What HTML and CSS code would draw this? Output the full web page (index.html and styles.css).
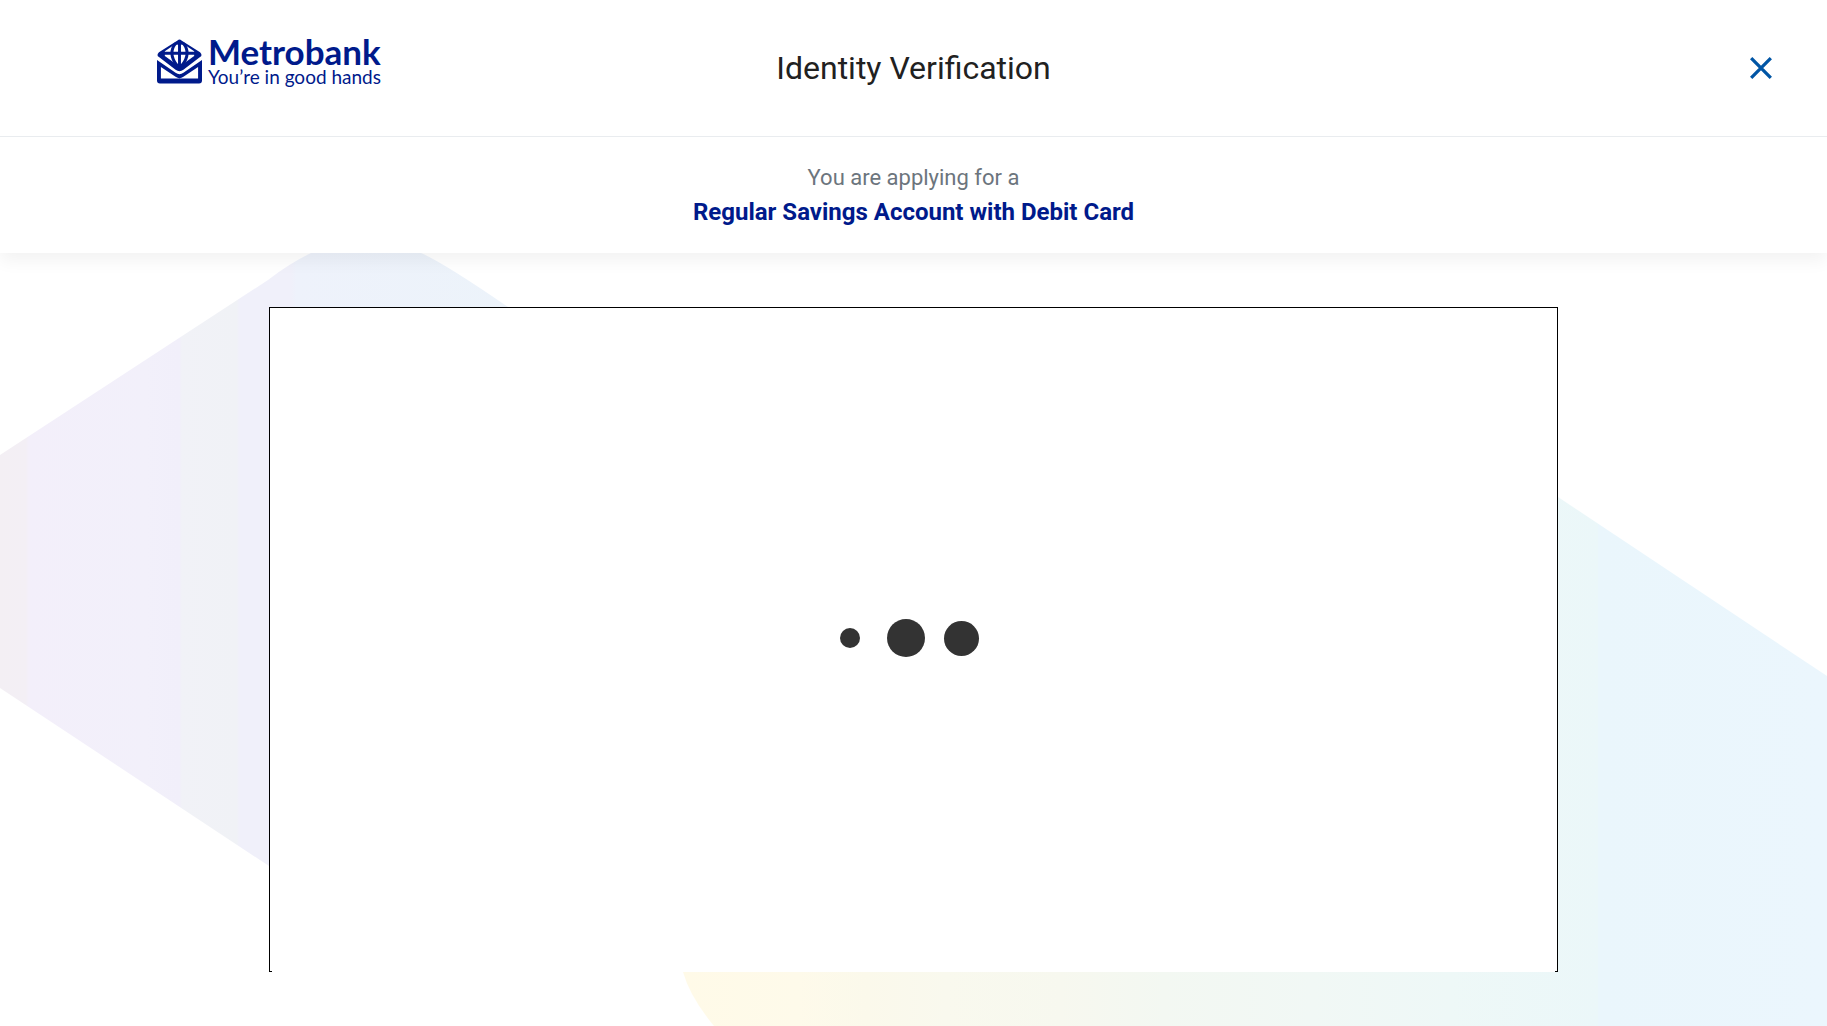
FILE: index.html
```html
<!DOCTYPE html>
<html lang="en">
<head>
<meta charset="utf-8">
<title>Identity Verification</title>
<link rel="stylesheet" href="styles.css">
</head>
<body>
<header class="top">
  <div class="bar">
    <a class="logo" href="#">
      <svg class="logo-mark" viewBox="0 0 46 45" aria-hidden="true">
        <path fill="#001a8b" d="M21 1Q23-1 25 1L44 13Q47 16 44 18L27 31Q23 34 19 31L2 18Q-1 16 2 13Z"/>
        <path fill="#fff" d="M17 6Q23 4 29 6L38 12V17L28 24Q23 26 18 24L8 17V12Z"/>
        <path fill="none" stroke="#001a8b" stroke-width="3" d="M23 2V29M6 14H40M19 4Q11 14 20 26M27 4Q35 14 26 26"/>
        <path fill="#001a8b" fill-rule="evenodd" d="M0 21 19 34Q23 37 27 34L46 21V42Q46 45 43 45H3Q0 45 0 42ZM4 28V40H42V28L27 38Q23 41 19 38Z"/>
      </svg>
      <span class="logo-text">
        <span class="logo-name">Metrobank</span>
        <span class="logo-tag">You’re in good hands</span>
      </span>
    </a>
    <h1 class="title">Identity Verification</h1>
    <button class="close" type="button" aria-label="Close">
      <svg viewBox="0 0 22 22" aria-hidden="true"><path d="M2 2 20 20M20 2 2 20" fill="none" stroke="#0055a5" stroke-width="3"/></svg>
    </button>
  </div>
  <div class="product">
    <p class="product-lead">You are applying for a</p>
    <p class="product-name">Regular Savings Account with Debit Card</p>
  </div>
</header>
<main class="stage">
  <svg class="backdrop" viewBox="0 0 1827 773" preserveAspectRatio="none" aria-hidden="true">
    <defs>
      <linearGradient id="violet" gradientUnits="userSpaceOnUse" x1="0" y1="0" x2="520" y2="0">
        <stop offset="0" stop-color="#f3eff4"/><stop offset=".05" stop-color="#f3eff5"/>
        <stop offset=".055" stop-color="#f3effa"/><stop offset=".28" stop-color="#f2f0fa"/>
        <stop offset=".345" stop-color="#f1effa"/><stop offset=".35" stop-color="#f1f2f7"/>
        <stop offset=".455" stop-color="#f0f2f6"/><stop offset=".46" stop-color="#f0f0fa"/>
        <stop offset=".56" stop-color="#f0f0fa"/><stop offset=".57" stop-color="#eef2fb"/>
        <stop offset="1" stop-color="#ecf3fa"/>
      </linearGradient>
      <linearGradient id="aqua" gradientUnits="userSpaceOnUse" x1="683" y1="0" x2="1827" y2="0">
        <stop offset="0" stop-color="#fffae8"/><stop offset=".1" stop-color="#fefaea"/>
        <stop offset=".16" stop-color="#fbf9eb"/><stop offset=".23" stop-color="#f9f9ee"/>
        <stop offset=".33" stop-color="#f7f8ef"/><stop offset=".42" stop-color="#f3f8f2"/>
        <stop offset=".55" stop-color="#f1f8f5"/><stop offset=".67" stop-color="#eef8f7"/>
        <stop offset=".8" stop-color="#ebf7f9"/><stop offset=".8" stop-color="#eaf6fc"/>
        <stop offset="1" stop-color="#ebf6fd"/>
      </linearGradient>
    </defs>
    <path fill="url(#violet)" d="M0 202 268 27Q290 10 311 0H421Q444 10 508 54V600L269 613 0 435Z"/>
    <path fill="url(#aqua)" d="M683 719Q690 744 714 773H1827V423L1558 244Z"/>
  </svg>
  <section class="frame" aria-label="Verification">
    <div class="frame-body" role="status" aria-label="Loading">
      <span class="dot dot-small"></span>
      <span class="dot dot-large"></span>
      <span class="dot dot-medium"></span>
    </div>
  </section>
</main>
</body>
</html>
```

FILE: styles.css
```css
* {
  box-sizing: border-box;
}

body {
  margin: 0;
  min-height: 100vh;
  display: flex;
  flex-direction: column;
  background: #fff;
  font-family: Roboto, sans-serif;
}

.top {
  position: relative;
  z-index: 1;
  background: #fff;
  box-shadow: 0 8px 16px rgba(0, 0, 0, 0.05);
}

.bar {
  display: grid;
  grid-template-columns: minmax(0, 1fr) auto minmax(0, 1fr);
  align-items: center;
  min-height: 137px;
  padding: 0 52px;
  border-bottom: 1px solid #e9ecef;
}

.logo {
  display: flex;
  align-items: center;
  gap: 6px;
  margin: 0 0 14px 105px;
  color: #001a8b;
  text-decoration: none;
  white-space: nowrap;
}

.logo-mark {
  width: 45px;
  height: 45px;
}

.logo-text {
  display: flex;
  flex-direction: column;
}

.logo-name {
  font: 700 35px/32px Lato, sans-serif;
}

.logo-tag {
  font: 400 19px/20px Lato, sans-serif;
}

.title {
  margin: 0;
  color: #212121;
  font-size: 32px;
  line-height: 36px;
  font-weight: 400;
}

.close {
  justify-self: end;
  display: flex;
  padding: 0;
  border: 0;
  background: none;
  cursor: pointer;
}

.close svg {
  width: 28px;
  height: 24px;
}

.product {
  padding: 24px 16px;
  text-align: center;
}

.product-lead,
.product-name {
  margin: 0;
  line-height: 34px;
}

.product-lead {
  color: #6c757d;
  font-size: 22px;
}

.product-name {
  color: #001a8b;
  font-size: 24px;
  font-weight: 700;
}

.stage {
  position: relative;
  flex: 1;
  display: flex;
  padding: 54px 269px;
}

.backdrop {
  position: absolute;
  inset: 0;
  width: 100%;
  height: 100%;
}

.frame {
  position: relative;
  flex: 1;
  display: flex;
  border: 1px solid #000;
  background: #fff;
}

.frame-body {
  flex: 1;
  display: flex;
  align-items: center;
  justify-content: center;
  margin: 0 2px -1px;
  padding-bottom: 4px;
  background: #fff;
}

.dot {
  display: flex;
  justify-content: center;
  align-items: center;
  width: 40px;
  height: 40px;
  margin-right: 16px;
}

.dot::before {
  content: "";
  border-radius: 50%;
  background: #333;
}

.dot-small::before {
  width: 20px;
  height: 20px;
}

.dot-large::before {
  width: 38px;
  height: 38px;
}

.dot-medium::before {
  width: 35px;
  height: 35px;
}
```
